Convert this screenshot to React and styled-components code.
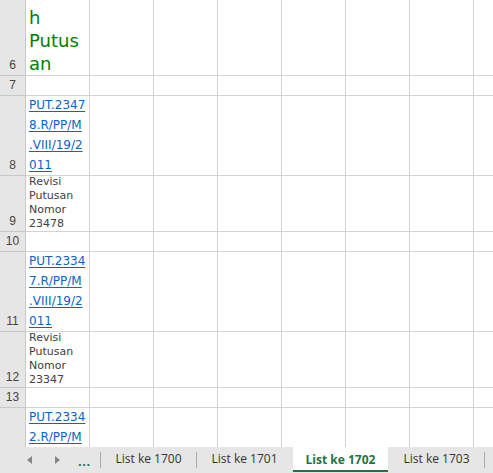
import React from "react";
import styled, { createGlobalStyle } from "styled-components";

const COLORS = {
  GRID: "#d4d4d4",
  HEADER_BG: "#e6e6e6",
  HEADER_TEXT: "#444444",
  LINK: "#0b63c8",
  GREEN: "#008000",
  TAB_GREEN: "#217346",
  CELL_TEXT: "#404040",
  SEP: "#a6a6a6"
};

const GlobalStyle = createGlobalStyle`
  html, body {
    margin: 0;
    padding: 0;
    background: #ffffff;
  }
  body {
    font-family: "DejaVu Sans", "Liberation Sans", sans-serif;
  }
`;

const Window = styled.div`
  width: 493px;
  height: 473px;
  display: flex;
  flex-direction: column;
  overflow: hidden;
`;

const Sheet = styled.div`
  height: 447px;
  flex-shrink: 0;
  display: flex;
  flex-direction: column;
  overflow: hidden;
  background: #ffffff;
`;

const Row = styled.div`
  display: flex;
  flex-shrink: 0;
  height: ${(p) => p.$height}px;
`;

const RowHeader = styled.div`
  width: 26px;
  flex-shrink: 0;
  box-sizing: border-box;
  background: ${COLORS.HEADER_BG};
  border-right: 1px solid #c8c8c8;
  border-bottom: 1px solid #c8c8c8;
  display: flex;
  align-items: flex-end;
  justify-content: center;
  font-family: "Liberation Sans", Arial, sans-serif;
  font-size: 12px;
  line-height: 19px;
  color: ${COLORS.HEADER_TEXT};
`;

const Cell = styled.div`
  width: 64px;
  flex-shrink: 0;
  box-sizing: border-box;
  border-right: 1px solid ${COLORS.GRID};
  border-bottom: 1px solid ${COLORS.GRID};
  padding: 0 0 0 3px;
  display: flex;
  flex-direction: column;
  justify-content: flex-end;
  overflow: hidden;
  white-space: nowrap;
`;

const Title = styled.span`
  font-size: 18px;
  line-height: 23px;
  color: ${COLORS.GREEN};
`;

const Link = styled.span`
  font-size: 12px;
  line-height: 20px;
  color: ${COLORS.LINK};
  text-decoration: underline;
  text-underline-offset: 2px;
`;

const Note = styled.span`
  font-size: 11px;
  line-height: 14px;
  color: ${COLORS.CELL_TEXT};
`;

const TabBar = styled.div`
  height: 26px;
  flex-shrink: 0;
  display: flex;
  align-items: center;
  background: ${COLORS.HEADER_BG};
  font-family: "Open Sans", "Liberation Sans", sans-serif;
`;

const Nav = styled.div`
  width: 100px;
  height: 100%;
  display: flex;
  align-items: center;
  flex-shrink: 0;
`;

const Arrow = styled.svg`
  width: 5px;
  height: 8px;
  margin-left: ${(p) => p.$gap}px;
  fill: #858585;
`;

const More = styled.span`
  margin-left: 18px;
  margin-top: 2px;
  font-size: 13px;
  font-weight: 700;
  color: ${COLORS.TAB_GREEN};
  letter-spacing: 0.5px;
`;

const Sep = styled.div`
  width: 1px;
  height: 16px;
  flex-shrink: 0;
  background: ${(p) => (p.$hide ? "transparent" : COLORS.SEP)};
`;

const Tab = styled.div`
  width: 95px;
  flex-shrink: 0;
  align-self: flex-start;
  box-sizing: border-box;
  height: 25px;
  display: flex;
  align-items: center;
  justify-content: center;
  font-size: 12px;
  padding-top: ${(p) => (p.$active ? "2px" : "0")};
  font-weight: ${(p) => (p.$active ? 700 : 400)};
  color: ${(p) => (p.$active ? COLORS.TAB_GREEN : "#333333")};
  background: ${(p) => (p.$active ? "#ffffff" : "transparent")};
  border-bottom: 2px solid
    ${(p) => (p.$active ? COLORS.TAB_GREEN : "transparent")};
  margin-top: 0;
`;

const rows = [
  { n: 6, h: 76, kind: "title", lines: ["h", "Putus", "an"] },
  { n: 7, h: 20 },
  { n: 8, h: 80, kind: "link", lines: ["PUT.2347", "8.R/PP/M", ".VIII/19/2", "011"] },
  { n: 9, h: 56, kind: "note", lines: ["Revisi", "Putusan", "Nomor", "23478"] },
  { n: 10, h: 20 },
  { n: 11, h: 80, kind: "link", lines: ["PUT.2334", "7.R/PP/M", ".VIII/19/2", "011"] },
  { n: 12, h: 56, kind: "note", lines: ["Revisi", "Putusan", "Nomor", "23347"] },
  { n: 13, h: 20 },
  { n: 14, h: 80, kind: "link", lines: ["PUT.2334", "2.R/PP/M", ".VIII/19/2", "011"] }
];

const TEXT = { title: Title, link: Link, note: Note };
const EMPTY_COLS = 7;

function CellText({ kind, lines }) {
  if (!kind) return null;
  const Text = TEXT[kind];
  return lines.map((l, i) => <Text key={i}>{l}</Text>);
}

const tabs = ["List ke 1700", "List ke 1701", "List ke 1702", "List ke 1703"];
const ACTIVE = 2;

export default function App() {
  return (
    <>
      <GlobalStyle />
      <Window>
        <Sheet>
          {rows.map((r) => (
            <Row key={r.n} $height={r.h}>
              <RowHeader>{r.n}</RowHeader>
              <Cell>
                <CellText kind={r.kind} lines={r.lines} />
              </Cell>
              {Array.from({ length: EMPTY_COLS }).map((_, i) => (
                <Cell key={i} />
              ))}
            </Row>
          ))}
        </Sheet>
        <TabBar>
          <Nav>
            <Arrow $gap={27} viewBox="0 0 5 8">
              <path d="M5 0 L0 4 L5 8 Z" />
            </Arrow>
            <Arrow $gap={23} viewBox="0 0 5 8">
              <path d="M0 0 L5 4 L0 8 Z" />
            </Arrow>
            <More>...</More>
          </Nav>
          <Sep />
          {tabs.map((t, i) => (
            <React.Fragment key={t}>
              <Tab $active={i === ACTIVE}>{t}</Tab>
              <Sep $hide={i === ACTIVE - 1 || i === ACTIVE} />
            </React.Fragment>
          ))}
        </TabBar>
      </Window>
    </>
  );
}
